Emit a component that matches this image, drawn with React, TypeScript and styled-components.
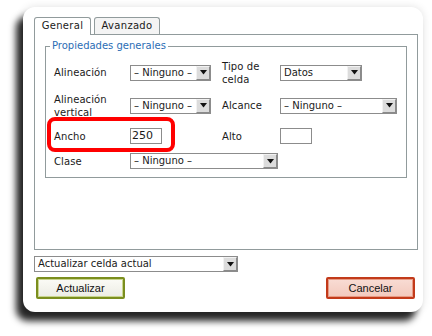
import React from "react";
import styled, { createGlobalStyle } from "styled-components";

const GlobalStyle = createGlobalStyle`
  html, body {
    margin: 0;
    padding: 0;
    background: #fff;
  }
  body {
    font-family: "DejaVu Sans", "Liberation Sans", sans-serif;
    font-size: 10px;
    color: #1a1a1a;
  }
`;

const Page = styled.div`
  width: 432px;
  height: 336px;
  overflow: hidden;
  padding: 7px 0 0 23px;
  box-sizing: border-box;
`;

const Dialog = styled.div`
  position: relative;
  width: 400px;
  height: 305px;
  box-sizing: border-box;
  padding: 10px 5px 0 11px;
  background: #fff;
  border-radius: 12px;
  box-shadow: -7px 9px 7px rgba(0, 0, 0, 0.85), 0 0 8px rgba(0, 0, 0, 0.12);
  display: flex;
  flex-direction: column;
`;

const Tabs = styled.div`
  display: flex;
  gap: 3px;
  height: 17px;
  position: relative;
  z-index: 1;
`;

const Tab = styled.div<{ active?: boolean; width: number }>`
  width: ${(p) => p.width}px;
  height: ${(p) => (p.active ? 18 : 17)}px;
  box-sizing: border-box;
  border: 1px solid #919b9c;
  border-bottom: none;
  border-radius: 3px 3px 0 0;
  background: ${(p) => (p.active ? "#fff" : "#f4f4f4")};
  text-align: center;
  line-height: 16px;
  letter-spacing: 0.3px;
`;

const TabPanel = styled.div`
  height: 216px;
  box-sizing: border-box;
  border: 1px solid #919b9c;
  padding: 4px 10px 0 10px;
`;

const Fieldset = styled.fieldset`
  margin: 0;
  padding: 6px 8px 8px 8px;
  border: 1px solid #919b9c;
`;

const Legend = styled.legend`
  padding: 0 2px;
  margin-left: -4px;
  color: #2b6db5;
  font-size: 10px;
  line-height: 14px;
`;

const Grid = styled.div`
  display: grid;
  grid-template-columns: 76px 92px 58px 1fr;
  grid-template-rows: 27px 27px 22px 16px;
  row-gap: 6px;
  align-items: center;
`;

const Label = styled.div`
  line-height: 13px;
  letter-spacing: 0.1px;
`;

const SelectBox = styled.div<{ width: number; span?: number }>`
  width: ${(p) => p.width}px;
  height: 16px;
  box-sizing: border-box;
  border: 1px solid #8c8c8c;
  background: #fff;
  display: flex;
  align-items: stretch;
  grid-column: span ${(p) => p.span ?? 1};
`;

const SelectText = styled.div`
  flex: 1;
  padding-left: 3px;
  line-height: 14px;
  white-space: nowrap;
  overflow: hidden;
`;

const Arrow = styled.div`
  width: 14px;
  box-sizing: border-box;
  background: #dcdcdc;
  border-top: 1px solid #f2f2f2;
  border-left: 1px solid #f2f2f2;
  border-right: 1px solid #8a8a8a;
  border-bottom: 1px solid #8a8a8a;
  display: flex;
  align-items: center;
  justify-content: center;
`;

const TextInput = styled.div`
  width: 32px;
  height: 16px;
  box-sizing: border-box;
  border: 1px solid #8c8c8c;
  background: #fff;
  line-height: 14px;
  padding-left: 1px;
  font-size: 11px;
`;

const Highlight = styled.div`
  position: absolute;
  left: 24px;
  top: 110px;
  width: 128px;
  height: 35px;
  box-sizing: border-box;
  border: 4px solid #f00;
  border-radius: 8px;
  pointer-events: none;
`;

const Footer = styled.div`
  display: flex;
  flex-direction: column;
  padding-top: 6px;
  gap: 5px;
`;

const ButtonRow = styled.div`
  display: flex;
  justify-content: space-between;
  padding: 0 3px 0 2px;
`;

const Button = styled.button<{ tone: "ok" | "cancel" }>`
  width: 89px;
  height: 22px;
  box-sizing: border-box;
  margin: 0;
  padding: 0;
  font-family: "Liberation Sans", Arial, sans-serif;
  font-size: 11px;
  color: #111;
  border: 2px solid ${(p) => (p.tone === "ok" ? "#7b8e1e" : "#c23a1a")};
  box-shadow: inset 0 0 0 1px
    ${(p) => (p.tone === "ok" ? "#c9d58e" : "#e89a84")};
  background: ${(p) =>
    p.tone === "ok"
      ? "linear-gradient(#fbfbf6, #ecece4)"
      : "linear-gradient(#f9dcd4, #f2c9bd)"};
  border-radius: 2px;
`;

const ArrowIcon = () => (
  <svg width="7" height="5" viewBox="0 0 7 5">
    <path d="M0 0 H7 L3.5 4.5 Z" fill="#111" />
  </svg>
);

const Select: React.FC<{ value: string; width: number; span?: number }> = ({
  value,
  width,
  span,
}) => (
  <SelectBox width={width} span={span}>
    <SelectText>{value}</SelectText>
    <Arrow>
      <ArrowIcon />
    </Arrow>
  </SelectBox>
);

const NONE = "– Ninguno –";

export default function App() {
  return (
    <>
      <GlobalStyle />
      <Page>
        <Dialog>
          <Tabs>
            <Tab active width={57}>
              General
            </Tab>
            <Tab width={66}>Avanzado</Tab>
          </Tabs>
          <TabPanel>
            <Fieldset>
              <Legend>Propiedades generales</Legend>
              <Grid>
                <Label>Alineación</Label>
                <Select value={NONE} width={81} />
                <Label>
                  Tipo de
                  <br />
                  celda
                </Label>
                <Select value="Datos" width={82} />

                <Label>
                  Alineación
                  <br />
                  vertical
                </Label>
                <Select value={NONE} width={81} />
                <Label>Alcance</Label>
                <Select value={NONE} width={117} />

                <Label>Ancho</Label>
                <TextInput>250</TextInput>
                <Label>Alto</Label>
                <TextInput />

                <Label>Clase</Label>
                <Select value={NONE} width={148} span={3} />
              </Grid>
            </Fieldset>
          </TabPanel>
          <Footer>
            <Select value="Actualizar celda actual" width={204} />
            <ButtonRow>
              <Button tone="ok">Actualizar</Button>
              <Button tone="cancel">Cancelar</Button>
            </ButtonRow>
          </Footer>
          <Highlight />
        </Dialog>
      </Page>
    </>
  );
}
